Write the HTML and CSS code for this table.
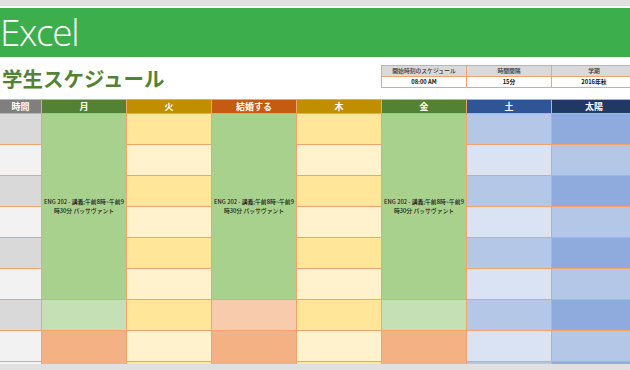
FILE: index.html
```html
<!DOCTYPE html>
<html lang="ja">
<head>
<meta charset="utf-8">
<title>学生スケジュール</title>
<link rel="stylesheet" href="styles.css">
</head>
<body>
<div class="page">
  <div class="topstrip"></div>
  <header class="banner"><span class="brand">Excel</span></header>
  <section class="titlebar">
    <h1 class="title">学生スケジュール</h1>
    <div class="info">
      <div class="ih">開始時刻のスケジュール</div>
      <div class="ih">時間間隔</div>
      <div class="ih">学期</div>
      <div class="iv">08:00 AM</div>
      <div class="iv">15分</div>
      <div class="iv">2016年秋</div>
    </div>
  </section>
  <div class="schedule">
    <div class="hd h-time">時間</div>
    <div class="hd h-mon">月</div>
    <div class="hd h-tue">火</div>
    <div class="hd h-wed">結婚する</div>
    <div class="hd h-thu">木</div>
    <div class="hd h-fri">金</div>
    <div class="hd h-sat">土</div>
    <div class="hd h-sun">太陽</div>

    <!-- time column -->
    <div class="c t-a r1 c1"></div>
    <div class="c t-b r2 c1"></div>
    <div class="c t-a r3 c1"></div>
    <div class="c t-b r4 c1"></div>
    <div class="c t-a r5 c1"></div>
    <div class="c t-b r6 c1"></div>
    <div class="c t-a r7 c1"></div>
    <div class="c t-b r8 c1"></div>
    <div class="c t-b r9 c1"></div>

    <!-- Monday -->
    <div class="c ev c2"><span>ENG 202 - 講義;午前8時~午前9<br>時30分 パッサヴァント</span></div>
    <div class="c g-lt r7 c2"></div>
    <div class="c or r89 c2"></div>

    <!-- Tuesday -->
    <div class="c y-a r1 c3"></div>
    <div class="c y-b r2 c3"></div>
    <div class="c y-a r3 c3"></div>
    <div class="c y-b r4 c3"></div>
    <div class="c y-a r5 c3"></div>
    <div class="c y-b r6 c3"></div>
    <div class="c y-a r7 c3"></div>
    <div class="c y-b r8 c3"></div>
    <div class="c y-a r9 c3"></div>

    <!-- Wednesday -->
    <div class="c ev c4"><span>ENG 202 - 講義;午前8時~午前9<br>時30分 パッサヴァント</span></div>
    <div class="c or-lt r7 c4"></div>
    <div class="c or r89 c4"></div>

    <!-- Thursday -->
    <div class="c y-a r1 c5"></div>
    <div class="c y-b r2 c5"></div>
    <div class="c y-a r3 c5"></div>
    <div class="c y-b r4 c5"></div>
    <div class="c y-a r5 c5"></div>
    <div class="c y-b r6 c5"></div>
    <div class="c y-a r7 c5"></div>
    <div class="c y-b r8 c5"></div>
    <div class="c y-a r9 c5"></div>

    <!-- Friday -->
    <div class="c ev c6"><span>ENG 202 - 講義;午前8時~午前9<br>時30分 パッサヴァント</span></div>
    <div class="c g-lt r7 c6"></div>
    <div class="c or r89 c6"></div>

    <!-- Saturday -->
    <div class="c b-a r1 c7"></div>
    <div class="c b-b r2 c7"></div>
    <div class="c b-a r3 c7"></div>
    <div class="c b-b r4 c7"></div>
    <div class="c b-a r5 c7"></div>
    <div class="c b-b r6 c7"></div>
    <div class="c b-a r7 c7"></div>
    <div class="c b-b r8 c7"></div>
    <div class="c b-a r9 c7"></div>

    <!-- Sunday -->
    <div class="c s-a r1 c8"></div>
    <div class="c s-b r2 c8"></div>
    <div class="c s-a r3 c8"></div>
    <div class="c s-b r4 c8"></div>
    <div class="c s-a r5 c8"></div>
    <div class="c s-b r6 c8"></div>
    <div class="c s-a r7 c8"></div>
    <div class="c s-b r8 c8"></div>
    <div class="c s-a r9 c8"></div>
  </div>
  <div class="footer"></div>
</div>
</body>
</html>
```
FILE: styles.css
```css
html, body {
  margin: 0;
  padding: 0;
  background: #ffffff;
}
body {
  width: 630px;
  height: 370px;
  overflow: hidden;
  font-family: "Noto Sans CJK JP", "Noto Sans", sans-serif;
}
.page {
  display: flex;
  flex-direction: column;
  height: 370px;
  width: 630px;
  overflow: hidden;
}
.topstrip {
  height: 6px;
  background: #e1e1e1;
  border-bottom: 2px solid #ffffff;
  flex: none;
}
.banner {
  height: 49px;
  background: #3cae4b;
  display: flex;
  align-items: flex-start;
  flex: none;
}
.brand {
  font-family: "Open Sans", "Lato", sans-serif;
  font-weight: 300;
  color: #ffffff;
  font-size: 37px;
  line-height: 40px;
  margin-top: 4px;
  margin-left: 0;
  letter-spacing: -1.4px;
}
.titlebar {
  height: 42px;
  display: flex;
  flex: none;
  align-items: flex-start;
}
.title {
  margin: 0;
  width: 381px;
  flex: none;
  padding-left: 2px;
  box-sizing: border-box;
  font-size: 20.5px;
  font-weight: 700;
  line-height: 42px;
  color: #548235;
  white-space: nowrap;
}
.info {
  margin-top: 8px;
  display: grid;
  grid-template-columns: repeat(3, 84px);
  grid-template-rows: 10px 10px;
  gap: 1px;
  padding: 1px;
  background: #f2a46c;
  flex: none;
}
.ih, .iv {
  font-size: 5.8px;
  line-height: 10px;
  text-align: center;
  white-space: nowrap;
}
.ih {
  background: #d9d9d9;
  color: #333333;
  font-weight: 500;
}
.iv {
  background: #ffffff;
  font-weight: 700;
  color: #111111;
}
.schedule {
  flex: none;
  height: 264px;
  overflow: hidden;
  display: grid;
  grid-template-columns: 41px repeat(7, 84px);
  grid-template-rows: 13px repeat(9, 30px);
  gap: 1px;
  padding-top: 1px;
  background: #f2a46c;
  width: 636px;
}
.hd {
  color: #ffffff;
  font-weight: 700;
  font-size: 9px;
  line-height: 13px;
  text-align: center;
  white-space: nowrap;
}
.h-time { background: #7f7f7f; }
.h-mon, .h-fri { background: #548235; }
.h-tue, .h-thu { background: #bf8f00; }
.h-wed { background: #c55a11; }
.h-sat { background: #2f5597; }
.h-sun { background: #1f3864; }

.c1 { grid-column: 1; }
.c2 { grid-column: 2; }
.c3 { grid-column: 3; }
.c4 { grid-column: 4; }
.c5 { grid-column: 5; }
.c6 { grid-column: 6; }
.c7 { grid-column: 7; }
.c8 { grid-column: 8; }
.r1 { grid-row: 2; }
.r2 { grid-row: 3; }
.r3 { grid-row: 4; }
.r4 { grid-row: 5; }
.r5 { grid-row: 6; }
.r6 { grid-row: 7; }
.r7 { grid-row: 8; }
.r8 { grid-row: 9; }
.r9 { grid-row: 10; }
.r89 { grid-row: 9 / span 2; }

.t-a { background: #d9d9d9; }
.t-b { background: #f2f2f2; }
.y-a { background: #ffe699; }
.y-b { background: #fff2cc; }
.b-a { background: #b4c7e7; }
.b-b { background: #dae3f3; }
.s-a { background: #8faadc; }
.s-b { background: #b4c7e7; }
.g-lt { background: #c5e0b4; }
.or { background: #f4b183; }
.or-lt { background: #f8cbad; }

.ev {
  grid-row: 2 / span 6;
  background: #a9d18e;
  display: flex;
  align-items: center;
  justify-content: center;
  text-align: center;
}
.ev span {
  font-size: 5.8px;
  line-height: 9px;
  font-weight: 500;
  color: #1a1a1a;
  white-space: nowrap;
  margin-top: -2px;
}
.footer {
  flex: 1;
  background: #e0e0e0;
}
```
